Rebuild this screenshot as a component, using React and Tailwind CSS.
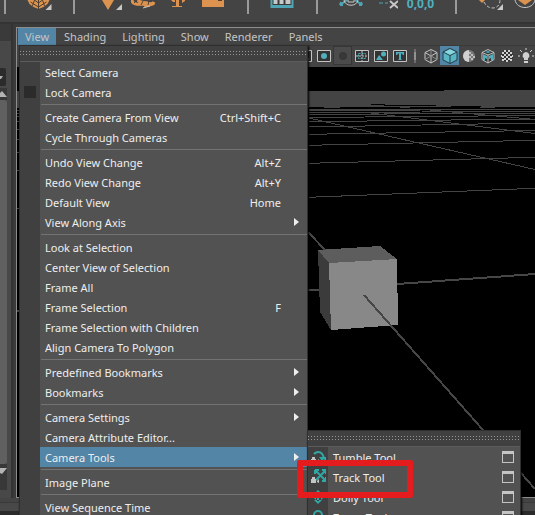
import React from "react";

const Tri = () => <path d="M25 4v6h-6z" fill="#c8c8c8" />;

function ShelfButton({ label, wide, children }) {
  return (
    <button aria-label={label} className={`${wide ? "w-[27px]" : "w-[26px]"} h-[22px] shrink-0`}>
      <svg viewBox="0 0 26 22" className="block h-[22px] w-full" fill="none">
        {children}
      </svg>
    </button>
  );
}

const ShelfRule = () => <div className="h-[14px] w-[2px] shrink-0 bg-[#9a9a9a]" />;

function Shelf() {
  return (
    <div className="flex h-[22px] shrink-0 items-start overflow-hidden bg-[#444444] pl-1">
      <ShelfRule />
      <div className="flex shrink-0 px-5">
        <ShelfButton label="Soft select" wide>
          <path d="M1 0h22l-2 4-4 3-5 2-5-2-4-3z" fill="#dd9350" />
          <path d="M12 9V0M12 7L4 2M12 7l8-5M12 3L8 0M12 3l4-3M6 6l2-6M18 6l-2-6" stroke="#51402f" />
          <Tri />
        </ShelfButton>
      </div>
      <ShelfRule />
      <div className="flex shrink-0 gap-2 px-[22px]">
        <ShelfButton label="Select by handle">
          <path d="M5 0h12l-6 10z" fill="#dd9350" />
          <Tri />
        </ShelfButton>
        <ShelfButton label="Select by curve">
          <path d="M1 0c0 4 5 5 12 4M7 0c1 3 6 2 9 3s6 1 7-1M13 6c4-2 8 0 10-3" stroke="#dd9350" strokeWidth="3" />
          <path d="M3 3l3-3M10 5l2-4M17 5l1-4" stroke="#51402f" />
          <path d="M12 8l7-2" stroke="#c8c8c8" />
        </ShelfButton>
        <ShelfButton label="Select by surface">
          <path d="M11 0h3v6h3v1H7V6h4zM17 0h3v1l-3 2z" fill="#dd9350" />
          <path d="M6 0h4v2H8z" fill="#dd9350" />
        </ShelfButton>
        <ShelfButton label="Select by rendering">
          <path d="M3 0h22v7H3z" fill="#dd9350" />
          <path d="M19 0h4v1h-4z" fill="#51402f" />
        </ShelfButton>
      </div>
      <ShelfRule />
      <div className="flex shrink-0 px-5">
        <ShelfButton label="Construction history" wide>
          <path d="M1 0h23v8H1z" fill="#4fa5b3" />
          <path d="M3 0h19v5H3z" fill="#3a3a3a" />
          <path d="M4 0h4v4H4zM10 0h4v4h-4zM16 0h5v4h-5z" fill="#c8c8c8" />
        </ShelfButton>
      </div>
      <ShelfRule />
      <div className="flex shrink-0 gap-2 px-5">
        <ShelfButton label="Symmetry">
          <path d="M2 5l7-5M24 5l-7-5M2 5l1-3M2 5h3M24 5h-3M24 5l-1-3" stroke="#4fa5b3" strokeWidth="2" />
          <path d="M6 0c1 7 13 7 14 0" stroke="#c8c8c8" />
          <path d="M10 0v2h6V0" stroke="#c8c8c8" />
        </ShelfButton>
        <ShelfButton label="Symmetry off">
          <path d="M7 3h4M13 3h3" stroke="#4fa5b3" />
          <path d="M18 1l8 7M26 1l-8 7" stroke="#c8c8c8" strokeWidth="2" />
        </ShelfButton>
        <button className="h-[7px] w-[29px] shrink-0 text-[12px] leading-[7px] font-bold text-[#4fb0bf]">0,0,0</button>
      </div>
      <ShelfRule />
      <div className="flex shrink-0 gap-2 px-5">
        <ShelfButton label="Marquee select">
          <path d="M2 0h6L5 3z" fill="#dd9350" />
          <path d="M7 2c2 4 5 6 9 6s7-3 7-8" stroke="#c8c8c8" strokeDasharray="3 2" />
          <path d="M26 4v6h-6z" fill="#c8c8c8" />
        </ShelfButton>
        <ShelfButton label="Component mode">
          <path d="M4 0c2 10 18 10 20 0" stroke="#c8c8c8" />
          <path d="M7 0h14l-7 5z" fill="#dd9350" />
        </ShelfButton>
      </div>
    </div>
  );
}

function PanelButton({ label, active, dim, children }) {
  return (
    <button
      aria-label={label}
      className={`flex h-[19px] w-[19px] shrink-0 items-center justify-center ${active ? "bg-[#5285a6]" : dim ? "border border-[#373737] bg-[#4b4b4b]" : ""}`}
    >
      <svg viewBox="0 0 16 16" className="block h-4 w-4 shrink-0" fill="none">
        {children}
      </svg>
    </button>
  );
}

const Frame = () => <path d="M1.500 2.500h13v11h-13z" fill="#333333" stroke="#c4c4c4" />;

function PanelToolbar() {
  return (
    <div className="flex h-[21px] shrink-0 items-start overflow-hidden bg-[#444444] pl-[278px]">
      <PanelButton label="Film gate"><Frame /><path d="M4 11h8" stroke="#c4c4c4" /></PanelButton>
      <PanelButton label="Resolution gate"><Frame /><circle cx="8" cy="8" r="3" fill="#50afbd" /></PanelButton>
      <PanelButton label="Gate mask" dim><circle cx="8" cy="8" r="4" fill="#383838" /></PanelButton>
      <PanelButton label="Field chart">
        <Frame />
        <path d="M2 8h12M8 3v10" stroke="#c4c4c4" strokeDasharray="2 1" />
        <path d="M4.500 5.500h7v5h-7z" stroke="#50afbd" strokeDasharray="2 1" />
      </PanelButton>
      <PanelButton label="Safe action"><Frame /><circle cx="10.500" cy="6" r="2.500" fill="#50afbd" /><path d="M3 12l3-5 4 5z" fill="#50afbd" /></PanelButton>
      <PanelButton label="Safe title"><Frame /><path d="M4 4h8v3h-1l-1-1.500H9V11l1 1H6l1-1V5.500H6L5 7H4z" fill="#50afbd" /></PanelButton>
      <div className="flex h-[19px] w-3 shrink-0 items-center justify-center">
        <svg viewBox="0 0 4 16" className="h-4 w-1"><path d="M1.500 1h1v14h-1zM1 4h2v8H1z" fill="#929292" /></svg>
      </div>
      <PanelButton label="Wireframe">
        <path d="M8 1.500l6 3v7l-6 3.500-6-3.500v-7zM2 4.500L8 8l6-3.500M8 8v7" stroke="#c4c4c4" />
        <path d="M8 1.500V8M2 11.500L8 8l6 3.500" stroke="#8c8c8c" />
      </PanelButton>
      <PanelButton label="Smooth shade" active>
        <path d="M8 .5L15 4v8l-7 3.500L1 12V4z" fill="#58b6c5" stroke="#253f48" />
        <path d="M8 .5L15 4 8 7.500 1 4z" fill="#86d7e2" stroke="#253f48" />
        <path d="M8 7.500v8" stroke="#253f48" />
      </PanelButton>
      <PanelButton label="Shaded material">
        <circle cx="8" cy="8" r="6" fill="#777777" />
        <path d="M8 2a6 6 0 000 12z" fill="#d0d0d0" />
        <path d="M8 4h2v2H8zM10 6h2v2h-2zM8 8h2v2H8zM10 10h2v2h-2zM12 8h2v2h-2z" fill="#bdbdbd" />
      </PanelButton>
      <PanelButton label="Textured wire">
        <path d="M8 1.500L14 4.500v7L8 15l-6-3.500v-7z" fill="#333333" stroke="#c4c4c4" />
        <path d="M2 4.500L8 7l6-2.500M8 7v8" stroke="#c4c4c4" />
        <path d="M3 6l4 2v3l-2-1v3l-2-1zM9 8l4-2v6l-2 1v-3l-2 1zM5 4l3-1 3 1-3 1z" fill="#50afbd" />
      </PanelButton>
      <PanelButton label="Textured">
        <circle cx="8" cy="8" r="6" fill="#303030" />
        <path d="M5 2h2v2H5zM9 2h2v2H9zM3 4h2v2H3zM7 4h2v2H7zM11 4h2v2h-2zM5 6h2v2H5zM9 6h2v2H9zM2 7h1v2H2zM13 7h1v2h-1zM3 8h2v2H3zM7 8h2v2H7zM11 8h2v2h-2zM5 10h2v2H5zM9 10h2v2H9zM7 12h2v2H7zM3 11h2v2H3zM11 11h2v2h-2z" fill="#d0d0d0" />
      </PanelButton>
      <PanelButton label="Lights">
        <path d="M8 4a3.500 3.500 0 00-2 6.300V12h4v-1.700A3.500 3.500 0 008 4zM6 13h4v2H6z" fill="#d0d0d0" />
        <path d="M8 0v2M2 2l2 2M14 2l-2 2M0 8h2M14 8h2" stroke="#d0d0d0" />
      </PanelButton>
    </div>
  );
}

function Viewport() {
  return (
    <div className="min-h-0 flex-1 overflow-hidden bg-black">
      <svg viewBox="17 67 518 430" className="block h-[430px] w-[518px] max-w-none" fill="none" shapeRendering="crispEdges">
        <path d="M17 91H444v-1H535v18H17z" fill="#444444" />
        <path d="M371 104.500h14M384 105.500h52M451 106.500h30M309 107.500h15M340 107.500h60M410 107.500h70M495 107.500h40" stroke="#000000" />
        <path
          stroke="#444444"
          d="M309 109.500H535M309 110.500L535 109.500M309 112.500L535 111.500M309 114.500L535 113M309 117.500L535 115.500M309 121.700L535 119M309 127L535 123M309 134.300L535 130.500M309 145.300L535 140.300M309 163.300L535 157.300M309 197.300L535 188.300M309 118L535 169.500M363 112L535 133.500M430 110L535 119.500M17 110.500h2M17 113.500h2M17 116.500h2M17 121.500h2M17 129.500h2M17 139.500h2M17 152.500h2M17 170.500h2M17 208.500h2"
        />
        <path d="M17 310.500h2M308 290.500L535 274M308 232L326 251" stroke="#464646" strokeWidth="2" />
        <path d="M318 250L329 263 331 330 320 312z" fill="#3b3b3b" />
        <path d="M318 250L380 246 397 259 329 263z" fill="#5d5d5d" />
        <path d="M329 263L397 259 398 325 331 330z" fill="#888888" />
        <path d="M364 295L535 489" stroke="#464646" strokeWidth="2" />
      </svg>
    </div>
  );
}

const TearOff = () => (
  <div className="flex h-4 items-center border-b border-[#5c5c5c] bg-[#404040]">
    <svg aria-hidden="true" className="h-[5px] w-full">
      <defs>
        <pattern id="dots" width="3" height="3" patternUnits="userSpaceOnUse">
          <rect width="1" height="1" fill="#989898" />
        </pattern>
      </defs>
      <rect width="100%" height="5" fill="url(#dots)" />
    </svg>
  </div>
);

const cameraIcons = {
  tumble: <path d="M4 5c4-4 9-2 10 5M14 13l-3-4h5z" stroke="#2fa8a6" strokeWidth="2" />,
  track: <path d="M6 2l9 9M15 2l-9 9M5 1h4M5 1v4M16 1h-4M16 1v4M16 12h-4M16 12V8" stroke="#2fa8a6" strokeWidth="2" />,
  dolly: <path d="M8 1l4 4H4zM8 15l4-4H4zM3 8l3-3v6zM14 8l-3-3v6zM7 4h2v8H7z" fill="#2fa8a6" />,
  zoom: <path d="M4 6a4 4 0 018 0a4 4 0 01-8 0M8 10v5" stroke="#2fa8a6" strokeWidth="2" />,
};

function ToolRow({ name, icon, marked }) {
  return (
    <li className="relative flex h-5">
      <button className="flex flex-1 items-center text-left">
        <span className="flex w-5 justify-center">
          <svg viewBox="0 0 16 16" className="h-4 w-4" fill="none">
            {cameraIcons[icon]}
            {(icon === "tumble" || icon === "track") && <path d="M1 10h5v4H1zM7 12l2-2v4l-2-1zM2 8h3v2H2z" fill="#c4c4c4" />}
            {icon === "dolly" && <path d="M6 7h4v2H6z" fill="#c4c4c4" />}
          </svg>
        </span>
        <span className="pt-[2px] pl-[5px]">{name}</span>
      </button>
      <button aria-label={`${name} options`} className="mr-[6px] h-3 w-3 self-center border border-t-[3px] border-[#c4c4c4]" />
      {marked && (
        <span className="pointer-events-none absolute -top-[7px] -left-[11px] z-10 h-[38px] w-[116px] rounded-[2px] border-[6px] border-[#e51c1e]" />
      )}
    </li>
  );
}

function ToolsSubmenu() {
  return (
    <div className="absolute -top-[17px] left-full z-10 w-[214px] border border-[#2f2f2f] bg-[#525252] shadow-[1px_1px_2px_#000]">
      <TearOff />
      <ul className="bg-linear-to-r from-[#404040] from-[20px] to-[#525252] to-[20px]">
        <ToolRow name="Tumble Tool" icon="tumble" />
        <ToolRow name="Track Tool" icon="track" marked />
        <ToolRow name="Dolly Tool" icon="dolly" />
        <ToolRow name="Zoom Tool" icon="zoom" />
      </ul>
    </div>
  );
}

const viewMenu = [
  [["Select Camera"], ["Lock Camera", "check"]],
  [["Create Camera From View", "Ctrl+Shift+C"], ["Cycle Through Cameras"]],
  [["Undo View Change", "Alt+Z"], ["Redo View Change", "Alt+Y"], ["Default View", "Home"], ["View Along Axis", "more"]],
  [
    ["Look at Selection"],
    ["Center View of Selection"],
    ["Frame All"],
    ["Frame Selection", "F"],
    ["Frame Selection with Children"],
    ["Align Camera To Polygon"],
  ],
  [["Predefined Bookmarks", "more"], ["Bookmarks", "more"]],
  [["Camera Settings", "more"], ["Camera Attribute Editor..."], ["Camera Tools", "open"]],
  [["Image Plane"]],
  [["View Sequence Time"]],
];

function MenuRow({ label, kind }) {
  const open = kind === "open";
  const more = open || kind === "more";
  const shortcut = kind && !more && kind !== "check" ? kind : null;
  const text = (
    <>
      <span className="flex-1 pt-[2px] pl-[5px]">{label}</span>
      {shortcut && <span className="pt-[2px] pr-[26px]">{shortcut}</span>}
      {more && (
        <svg viewBox="0 0 5 8" className="mr-2 h-2 w-[5px]">
          <path d="M0 0l5 4-5 4z" fill="#eeeeee" />
        </svg>
      )}
    </>
  );
  return (
    <li className="relative flex h-5 items-center">
      {kind === "check" ? (
        <label className="flex flex-1 items-center">
          <span className="flex w-5 justify-center">
            <input type="checkbox" className="h-3 w-3 appearance-none bg-[#2b2b2b]" />
          </span>
          {text}
        </label>
      ) : (
        <button className={`ml-5 flex h-5 flex-1 items-center text-left ${open ? "bg-[#5285a6]" : ""}`}>{text}</button>
      )}
      {open && <ToolsSubmenu />}
    </li>
  );
}

function ViewMenu() {
  return (
    <div className="absolute top-full left-px z-10 w-[289px] border border-[#2f2f2f] bg-[#525252] text-[#eeeeee] shadow-[1px_1px_2px_#000]">
      <TearOff />
      <div className="bg-linear-to-r from-[#404040] from-[20px] to-[#525252] to-[20px]">
        {viewMenu.map((group, i) => (
          <React.Fragment key={i}>
            {i > 0 && <hr className="my-[2px] ml-[21px] border-t border-[#737373]" />}
            <ul>
              {group.map(([label, kind]) => (
                <MenuRow key={label} label={label} kind={kind} />
              ))}
            </ul>
          </React.Fragment>
        ))}
      </div>
    </div>
  );
}

function MenuBar() {
  return (
    <nav className="flex h-[17px] shrink-0 bg-[#444444] pl-px text-[#c4c4c4]">
      <div className="relative flex">
        <button className="bg-[#5285a6] px-[7px] leading-[17px]">View</button>
        <ViewMenu />
      </div>
      {["Shading", "Lighting", "Show", "Renderer", "Panels"].map((m) => (
        <button key={m} className="px-2 leading-[17px]">
          {m}
        </button>
      ))}
    </nav>
  );
}

function Dock() {
  return (
    <aside className="flex w-[13px] shrink-0 flex-col border-r-2 border-[#333333] bg-[#484848]">
      <div className="h-[17px] shrink-0 bg-[#3a3a3a]" />
      <button aria-label="Dock options" className="mt-[27px] flex h-[18px] w-[6px] items-center rounded-r-[2px] bg-[#2b2b2b]">
        <svg viewBox="0 0 4 3" className="h-[3px] w-1"><path d="M0 0h3L1 3H0z" fill="#b0b0b0" /></svg>
      </button>
      <button aria-label="Scroll up" className="mt-[2px] flex h-3 w-[7px] items-center bg-[#383838]">
        <svg viewBox="0 0 7 6" className="h-[6px] w-[7px]"><path d="M2 0l5 6H0V2z" fill="#b4b4b4" /></svg>
      </button>
      <div className="w-[7px] flex-1 rounded-r-[3px] bg-[#606060]" />
      <button aria-label="Scroll down" className="flex h-[26px] w-[7px] items-start bg-[#383838] pt-1">
        <svg viewBox="0 0 7 6" className="h-[6px] w-[7px]"><path d="M0 0h7L2 6 0 5z" fill="#b4b4b4" /></svg>
      </button>
      <div className="h-2 shrink-0" />
    </aside>
  );
}

export default function App() {
  return (
    <div className="flex h-screen flex-col overflow-hidden bg-[#3a3a3a] font-['Noto_Sans',sans-serif] text-[11px] leading-4 whitespace-nowrap">
      <Shelf />
      <div className="h-[2px] shrink-0 bg-[#343434]" />
      <div className="flex min-h-0 flex-1">
        <Dock />
        <main className="mt-[3px] ml-[3px] flex min-w-0 flex-1 flex-col border-t border-b border-l border-[#8c8c8c]">
          <MenuBar />
          <div className="h-px shrink-0 bg-[#3a3a3a]" />
          <PanelToolbar />
          <Viewport />
        </main>
      </div>
      <footer className="h-[17px] shrink-0">
        <div className="h-1 bg-[#444444]" />
        <div className="mt-px h-2 bg-[#484848]" />
        <div className="h-1 bg-[#2b2b2b]" />
      </footer>
    </div>
  );
}
